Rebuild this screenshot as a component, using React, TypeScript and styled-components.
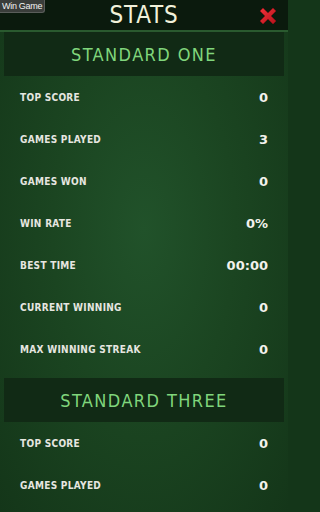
import React, { FC } from 'react'
import styled, { createGlobalStyle } from 'styled-components'

type Stat = { label: string; value: string }
type Mode = { title: string; stats: Stat[] }

const modes: Mode[] = [
  {
    title: 'STANDARD ONE',
    stats: [
      { label: 'TOP SCORE', value: '0' },
      { label: 'GAMES PLAYED', value: '3' },
      { label: 'GAMES WON', value: '0' },
      { label: 'WIN RATE', value: '0%' },
      { label: 'BEST TIME', value: '00:00' },
      { label: 'CURRENT WINNING', value: '0' },
      { label: 'MAX WINNING STREAK', value: '0' },
    ],
  },
  {
    title: 'STANDARD THREE',
    stats: [
      { label: 'TOP SCORE', value: '0' },
      { label: 'GAMES PLAYED', value: '0' },
    ],
  },
]

const CloseIcon: FC = () => (
  <svg width="20" height="20" viewBox="0 0 20 20">
    <defs>
      <linearGradient id="xred" x1="0" y1="0" x2="1" y2="1">
        <stop offset="0" stopColor="#f0333a" />
        <stop offset="1" stopColor="#b5121b" />
      </linearGradient>
    </defs>
    <path
      d="M2 5 L5 2 L10 7 L15 2 L18 5 L13 10 L18 15 L15 18 L10 13 L5 18 L2 15 L7 10 Z"
      fill="url(#xred)"
      stroke="#8e0d14"
      strokeWidth="0.6"
      strokeLinejoin="round"
    />
  </svg>
)

const App: FC = () => {
  return (
    <>
      <GlobalStyle />
      <Page>
        <TopBar>
          <Tooltip>Win Game</Tooltip>
          <Title>STATS</Title>
          <CloseButton aria-label="close">
            <CloseIcon />
          </CloseButton>
        </TopBar>
        <Sections>
          {modes.map((mode) => (
            <Section key={mode.title}>
              <SectionHeader>{mode.title}</SectionHeader>
              {mode.stats.map((s) => (
                <Row key={s.label}>
                  <Label>{s.label}</Label>
                  <Value>{s.value}</Value>
                </Row>
              ))}
            </Section>
          ))}
        </Sections>
      </Page>
    </>
  )
}

export default App

const GlobalStyle = createGlobalStyle`
  html, body {
    margin: 0;
    padding: 0;
    background: #143619;
    overflow: hidden;
  }
  body {
    font-family: "DejaVu Sans Condensed", "DejaVu Sans", sans-serif;
  }
`

const Page = styled.div`
  width: 288px;
  height: 512px;
  overflow: hidden;
  background: radial-gradient(ellipse at 50% 45%, #21522a 0%, #1b4521 45%, #143619 100%);
`

const TopBar = styled.div`
  position: relative;
  height: 30px;
  display: flex;
  align-items: center;
  justify-content: center;
  background: #0b1a0d;
  border-bottom: 2px solid #2a5a2f;
`

const Tooltip = styled.div`
  position: absolute;
  left: 0;
  top: 0;
  padding: 0 2px;
  height: 12px;
  line-height: 12px;
  font-family: "Liberation Sans", Arial, sans-serif;
  font-size: 9px;
  letter-spacing: -0.3px;
  color: #f2f2f2;
  background: #3a3d3a;
  border: 1px solid #5a5d5a;
  border-top: none;
  border-left: none;
  border-radius: 0 0 3px 0;
`

const Title = styled.h1`
  margin: 0;
  font-family: "DejaVu Sans Condensed", "DejaVu Sans", sans-serif;
  font-weight: normal;
  font-size: 24px;
  letter-spacing: 0.8px;
  color: #f1f1da;
  line-height: 30px;
`

const CloseButton = styled.div`
  position: absolute;
  right: 10px;
  top: 6px;
  width: 20px;
  height: 20px;
`

const Sections = styled.div`
  display: flex;
  flex-direction: column;
  gap: 8px;
`

const Section = styled.div`
  display: flex;
  flex-direction: column;
`

const SectionHeader = styled.div`
  margin: 0 4px;
  height: 44px;
  display: flex;
  align-items: center;
  justify-content: center;
  background: #112a15;
  color: #80d67c;
  font-family: "DejaVu Sans Condensed", "DejaVu Sans", sans-serif;
  font-size: 18px;
  letter-spacing: 1.4px;
`

const Row = styled.div`
  height: 42px;
  display: flex;
  align-items: center;
  justify-content: space-between;
  padding: 0 20px;
`

const Label = styled.span`
  font-family: "DejaVu Sans Condensed", "DejaVu Sans", sans-serif;
  font-weight: bold;
  font-size: 10px;
  letter-spacing: 0.3px;
  color: #e6e6e0;
`

const Value = styled.span`
  font-family: "DejaVu Sans", sans-serif;
  font-weight: bold;
  font-size: 13px;
  color: #f2f2ec;
`
